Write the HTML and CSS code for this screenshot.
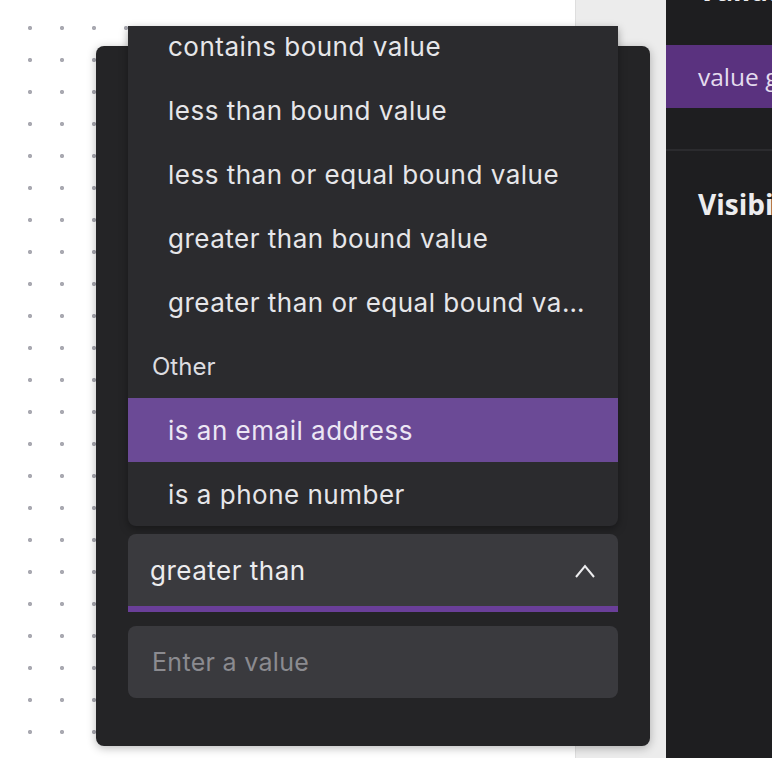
FILE: index.html
```html
<!DOCTYPE html>
<html lang="en">
<head>
    <meta charset="UTF-8">
    <title>validation rule editor</title>
    <link rel="stylesheet" href="styles.css">
</head>
<body>
<div id="workspace">
    <div id="canvas"></div>
    <div id="gutter"></div>

    <div id="popover">
        <div id="menu">
            <ul class="options">
                <li class="opt">contains bound value</li>
                <li class="opt">less than bound value</li>
                <li class="opt">less than or equal bound value</li>
                <li class="opt">greater than bound value</li>
                <li class="opt">greater than or equal bound value</li>
                <li class="group">Other</li>
                <li class="opt active">is an email address</li>
                <li class="opt">is a phone number</li>
            </ul>
        </div>

        <div id="select">
            <span>greater than</span>
            <svg class="chev" width="22" height="16" viewBox="0 0 22 16">
                <path d="M2 14 L11 3 L20 14" fill="none" stroke="#ececee" stroke-width="2"/>
            </svg>
        </div>

        <input id="val" type="text" placeholder="Enter a value"/>
    </div>
</div>

<div id="inspector">
    <div class="section">
        <h3 class="cut">Validation</h3>
        <div class="rule">value greater than</div>
    </div>
    <div class="section">
        <h3>Visibility</h3>
    </div>
</div>
</body>
</html>
```

FILE: styles.css
```css
* {
    padding: 0;
    margin: 0;
    box-sizing: border-box;
}
body {
    display: flex;
    width: 772px;
    height: 758px;
    overflow: hidden;
    background: #ffffff;
    font-family: Inter, "Noto Sans", sans-serif;
}

#workspace {
    position: relative;
    display: flex;
    width: 666px;
    height: 100%;
}
#canvas {
    width: 575px;
    background-color: #ffffff;
    background-image: radial-gradient(circle, #a9a9b1 1.8px, transparent 2.4px);
    background-size: 32px 32px;
    background-position: 14px 12px;
}
#gutter {
    flex: 1;
    background: #ececec;
    border-left: 1px solid #dedede;
}

/* the rule editor floats over the canvas */
#popover {
    position: absolute;
    left: 96px;
    top: 46px;
    width: 554px;
    height: 700px;
    padding: 0 32px;
    background: #242426;
    border-radius: 8px;
    box-shadow: 0 2px 10px rgba(0, 0, 0, 0.28);
}

#menu {
    height: 500px;
    margin-top: -20px;
    background: #2b2b2e;
    border-radius: 0 0 8px 8px;
    overflow: hidden;
    box-shadow: 0 3px 8px rgba(0, 0, 0, 0.35);
}
.options {
    list-style: none;
    margin-top: -12px;
}
.options li {
    height: 64px;
    padding-top: 1px;
    line-height: 63px;
    font-size: 26px;
    letter-spacing: 0.5px;
    color: #e6e6e9;
    white-space: nowrap;
    overflow: hidden;
    text-overflow: ellipsis;
}
.opt {
    padding: 0 30px 0 40px;
}
.options .group {
    padding: 1px 24px 0;
    font-size: 24px;
    letter-spacing: 0;
    color: #dcdce0;
}
.opt.active {
    background: #6b4a96;
    color: #ece6f4;
}

#select {
    display: flex;
    align-items: center;
    justify-content: space-between;
    height: 78px;
    margin-top: 8px;
    padding: 0 22px;
    background: #3a3a3e;
    border-radius: 8px 8px 0 0;
    border-bottom: 6px solid #6a3f99;
    font-size: 26px;
    letter-spacing: 0.5px;
    color: #ececee;
}
.chev {
    margin-top: 1px;
}

#val {
    display: block;
    width: 100%;
    height: 72px;
    margin-top: 14px;
    padding: 0 24px;
    border: 0;
    outline: none;
    border-radius: 8px;
    background: #3a3a3e;
    font-family: Inter, "Noto Sans", sans-serif;
    font-size: 25px;
    letter-spacing: 0.3px;
    color: #ececee;
}
#val::placeholder {
    color: #8b8b90;
}

#inspector {
    flex: 1;
    background: #1e1e20;
    font-family: "Open Sans", Lato, sans-serif;
    overflow: hidden;
}
.section {
    border-bottom: 2px solid #2b2b2e;
}
.section h3 {
    padding: 0 32px;
    font-size: 28px;
    font-weight: 700;
    line-height: 32px;
    color: #ececee;
    white-space: nowrap;
}
h3.cut {
    margin-top: -26px;
}
.rule {
    height: 63px;
    margin: 39px 0 41px;
    padding: 0 32px;
    line-height: 63px;
    font-size: 24.5px;
    background: #5a327f;
    color: #e4dcee;
    white-space: nowrap;
}
.section + .section {
    border-bottom: 0;
    padding-top: 37px;
}
```
